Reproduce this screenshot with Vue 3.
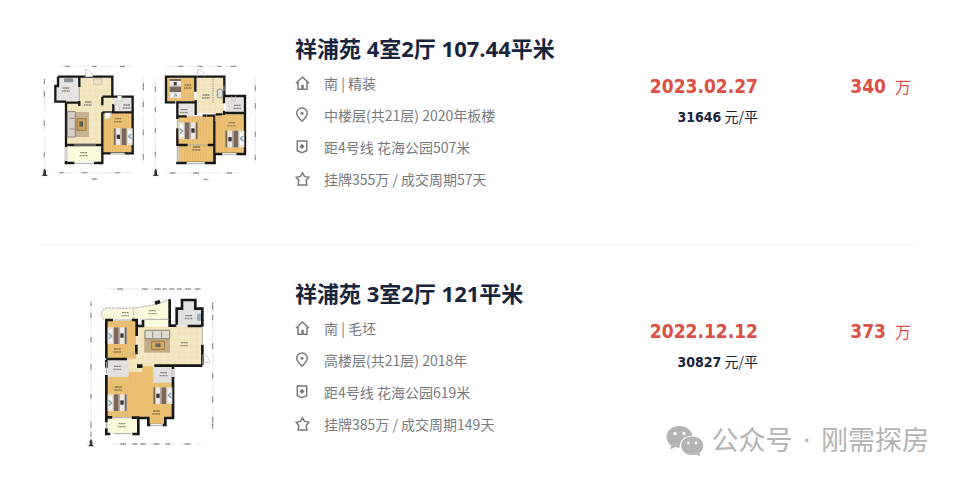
<script setup>
const listings = [
  {
    id: 1,
    plan: 'duplex',
    title: '祥浦苑 4室2厅 107.44平米',
    facts: [
      { icon: 'home', text: '南 | 精装' },
      { icon: 'pin', text: '中楼层(共21层) 2020年板楼' },
      { icon: 'metro', text: '距4号线 花海公园507米' },
      { icon: 'star', text: '挂牌355万 / 成交周期57天' }
    ],
    date: '2023.02.27',
    unit: '31646',
    total: '340'
  },
  {
    id: 2,
    plan: 'single',
    title: '祥浦苑 3室2厅 121平米',
    facts: [
      { icon: 'home', text: '南 | 毛坯' },
      { icon: 'pin', text: '高楼层(共21层) 2018年' },
      { icon: 'metro', text: '距4号线 花海公园619米' },
      { icon: 'star', text: '挂牌385万 / 成交周期149天' }
    ],
    date: '2022.12.12',
    unit: '30827',
    total: '373'
  }
]
</script>

<template>
  <main class="page">
    <svg class="defs" width="0" height="0" aria-hidden="true">
      <defs>
        <g id="bed">
          <rect width="58" height="50" fill="#eee9e1" />
          <rect x="18" width="15" height="50" fill="#77685b" />
          <rect x="33" width="4" height="50" fill="#b7aaa0" />
          <rect x="51" width="6" height="50" fill="#75665a" />
          <rect x="38" y="18" width="10" height="13" fill="#3b3938" />
          <rect x="2" y="5" width="13" height="17" rx="3" fill="#fff" stroke="#b5ada3" />
          <rect x="2" y="28" width="13" height="17" rx="3" fill="#fff" stroke="#b5ada3" />
          <path d="M3 18l9 8-8 8" fill="none" stroke="#7fa9b8" stroke-width="4" />
        </g>
        <g id="label" fill="none" stroke="#463f36" stroke-width="4" opacity=".6">
          <path d="M-10-4H10" stroke-dasharray="6 1" />
          <path d="M-12 5H12" stroke-dasharray="4 1.500 3 1" />
        </g>
        <g id="compass" fill="#303030">
          <path d="M0-14l4 8v10l6 5H-9l5-5V-6z" />
          <circle r="11" fill="none" stroke="#ccc" />
        </g>
        <pattern id="wood" width="24" height="32" patternUnits="userSpaceOnUse">
          <rect width="24" height="32" fill="#e9bc6c" />
          <path d="M4 0v32M12 0v32M20 0v32" stroke="#efc780" stroke-width="2" />
        </pattern>
        <pattern id="tile" width="18" height="18" patternUnits="userSpaceOnUse">
          <rect width="18" height="18" fill="#f2e3bb" />
          <path d="M0 9L9 0l9 9-9 9z" fill="#f4e7c4" />
        </pattern>
      </defs>
    </svg>

    <article v-for="item in listings" :key="item.id" class="listing">
      <div class="photo">
        <svg v-if="item.plan === 'duplex'" class="plan" viewBox="30 0 654 405" width="218" height="135" role="img" aria-label="户型图">
          <g fill="none" stroke="#dedede" stroke-width="2">
            <path d="M88 34H308M88 353H308M43 68V340M340 68V322M408 34H640M408 354H640M376 68V335M676 68V322" stroke-dasharray="46 5 3 5" />
          </g>
          <g fill="none" stroke="#8d8d8d" stroke-width="4" stroke-dasharray="4 1 7 1">
            <path d="M105 34h15M186 34h15M270 34h15M87 353h15M155 353h17M255 353h16M43 72v15M43 108v17M43 197v15M43 292v15M340 85v20M340 140v16M340 225v16M340 298v16M186 372h16M445 34h15M504 34h15M562 34h12M602 34h18M420 354h16M490 354h17M590 354h16M376 95v15M376 157v15M376 220v15M376 290v15M676 92v15M676 145v16M676 230v15M676 300v15M520 373h15" />
          </g>
          <use href="#compass" x="44" y="354" /><use href="#compass" x="377" y="354" />

          <path d="M85 68H247V126H305V170H217V268H108V140H78V94H85z" fill="url(#tile)" />
          <path d="M85 68h61v70H78V94h7zM250 126h55v44h-55z" fill="#e4e3e1" />
          <path d="M220 175h88v120h-88z" fill="url(#wood)" />
          <path d="M108 272h108v50H108z" fill="#fafbdc" />
          <path d="M108 140v183M84 65h163v60h61v170h-91v28M84 65v28h-8v47h32M148 68v28M148 138v15M110 143h40M217 125h32M217 126v25M217 172v125M217 172h91M250 171v-24M108 270h108M104 324h30M192 324h28" fill="none" stroke="#171717" stroke-width="7" />
          <path d="M134 325h58M242 297h42M108 276v42" stroke="#fff" stroke-width="8" />
          <path d="M134 325h58M242 297h42M108 276v42M148 96v42M132 270h66" stroke="#aaa" stroke-width="3" fill="none" />
          <path d="M166 65V43q20 2 22 22M225 173v21q17-2 19-21M251 148q18 2 18 21M263 122v15h12v-15" fill="#fff" stroke="#bdb6a6" stroke-width="2" />
          <rect x="102" y="70" width="28" height="12" rx="3" fill="#899096" />
          <rect x="190" y="72" width="26" height="17" fill="#e9dfc8" stroke="#a39882" />
          <rect x="127" y="171" width="50" height="75" fill="#c6b391" />
          <path d="M112 170h24v76h-24z" fill="#d8d1c7" stroke="#8d8175" stroke-width="3" />
          <path d="M119 190h15M119 222h15" stroke="#90867d" stroke-width="3" />
          <rect x="141" y="191" width="27" height="35" fill="#d2a456" stroke="#9c783d" stroke-width="3" />
          <path d="M148 199h11v16h-11z" fill="#535b56" />
          <use href="#bed" transform="translate(308 270) rotate(180)" />
          <use href="#label" x="108" y="103" /><use href="#label" x="174" y="145" /><use href="#label" x="290" y="154" /><use href="#label" x="264" y="195" /><use href="#label" x="161" y="297" />

          <path d="M409 67h84v72h-84z" fill="url(#wood)" />
          <path d="M499 67h83v108h-83z" fill="url(#tile)" />
          <path d="M443 144h48v40h-48zM588 126h54v48h-54z" fill="#e3e2df" />
          <path d="M442 184h108v138H442zM556 178h87v118h-87z" fill="url(#wood)" />
          <path d="M436 142h-28V65h175v58h62v174h-91v27H442V142h58M496 67v43M497 135v45M440 184h30M518 182h35v141M582 125v20M582 174h63M557 178h20M582 167v13M442 270h31M533 270h20" fill="none" stroke="#171717" stroke-width="7" />
          <path d="M470 325h54M577 298h42M442 273v47M442 192v28" stroke="#fff" stroke-width="8" />
          <path d="M470 325h54M577 298h42M442 273v47M474 270h58M442 192v28M582 92v16" stroke="#aaa" stroke-width="3" />
          <path d="M503 65V43q20 2 21 22M476 134v-20q16 2 17 20M507 179v20q22-2 24-20M556 180v18q18-2 20-18M605 122v14h12v-14" fill="none" stroke="#c1bcae" stroke-width="2" />
          <path d="M549 70v74" stroke="#94907f" stroke-width="3" stroke-dasharray="4 3" />
          <rect x="562" y="102" width="15" height="27" rx="5" fill="#ddd" stroke="#898985" stroke-width="3" />
          <use href="#bed" transform="translate(419 129) rotate(-90) scale(1 .68)" />
          <use href="#bed" x="446" y="202" /><use href="#bed" transform="translate(643 277) rotate(180)" />
          <use href="#label" x="474" y="94" /><use href="#label" x="528" y="124" /><use href="#label" x="462" y="168" /><use href="#label" x="622" y="155" /><use href="#label" x="605" y="207" /><use href="#label" x="500" y="280" />
        </svg>

        <svg v-else class="plan" viewBox="0 0 435 525" width="145" height="175" role="img" aria-label="户型图">
          <g fill="none" stroke="#dedede" stroke-width="2" stroke-dasharray="45 5">
            <path d="M90 27H372M42 65V480M407 65V450M104 492H372" />
          </g>
          <path d="M121 27h17M195 27h17M233 27h18M257 27h11M278 27h14M300 27h14M325 27h17M354 27h16M42 65v14M42 98v16M42 172v15M42 253v16M42 343v15M42 425v18M42 455v15M407 68v22M407 106v15M407 190v17M407 280v15M407 350v17M407 411v35M130 492h17M167 492h14M190 492h16M230 492h17M266 492h13M323 492h17" fill="none" stroke="#8d8d8d" stroke-width="4" stroke-dasharray="5 1 7 1" />
          <use href="#compass" x="42" y="490" />
          <path d="M81 119q-20-25 10-36Q205 92 278 57v79h-75v-19H82z" fill="#fafbdc" />
          <path d="M81 119q-20-25 10-36Q205 92 278 57" fill="none" stroke="#c4c4c4" stroke-width="4" stroke-dasharray="8 2" />
          <path d="M170 87v31M278 61v66" stroke="#adadad" stroke-width="2" />
          <path d="M184 139h190v115H288v21H88v-39h90z" fill="url(#tile)" />
          <path d="M318 63h35v25h22v49h-78V88h21z" fill="#e0e0df" />
          <path d="M91 122h87v114H91z" fill="url(#wood)" />
          <path d="M88 285h200v127h-25v22h-49v-22H88zM154 275h78v12h-78zM196 259h36v29h-36z" fill="url(#wood)" />
          <path d="M88 241h66v51H88zM229 259h60v49h-60z" fill="#e2e1df" />
          <path d="M90 414h91v45H90z" fill="#fafbdc" />
          <path d="M88 235V120h20M164 120h15v48M88 237h62M178 194v29M198 119v19h-19M278 58v79h20M332 138h42M299 134V86h16V60h40v26h21v54M376 194v60M376 257h-88v157h-23v21h-51v-21H188M88 240v222h12M88 412h18M164 413h20v49h-18M180 259h16M232 257h56" fill="none" stroke="#171717" stroke-width="8" />
          <path d="M234 70l15-6M180 258h16" stroke="#171717" stroke-width="11" />
          <path d="M220 436h37M88 263v22M288 267v24M88 427v18" stroke="#fff" stroke-width="9" />
          <path d="M220 436h37M88 246v35M288 267v24M88 427v18M110 120h52M203 118h72M109 461h53M105 413h60M376 140v54" stroke="#aaa" stroke-width="3" />
          <path d="M376 252V225q21 3 23 22h-23M178 193q-25 2-23 26h23M135 412v-17q16 2 18 17" fill="none" stroke="#c1bcae" stroke-width="2" />
          <rect x="202" y="158" width="77" height="60" fill="#c3ad87" />
          <path d="M204 151h74v25h-74z" fill="#e1dbd2" stroke="#8d8175" stroke-width="3" />
          <path d="M227 155v18M254 155v18" stroke="#90867d" stroke-width="3" />
          <rect x="224" y="184" width="38" height="24" fill="#d8ac60" stroke="#98743a" stroke-width="3" />
          <path d="M235 190h16v11h-16z" fill="#626862" />
          <rect x="360" y="101" width="12" height="22" rx="3" fill="#9dabb4" />
          <use href="#bed" x="92" y="142" /><use href="#bed" x="92" y="343" /><use href="#bed" transform="translate(286 372) rotate(180)" />
          <use href="#label" x="145" y="102" /><use href="#label" x="227" y="96" /><use href="#label" x="335" y="111" /><use href="#label" x="322" y="192" /><use href="#label" x="121" y="211" /><use href="#label" x="121" y="263" /><use href="#label" x="260" y="282" /><use href="#label" x="124" y="325" /><use href="#label" x="238" y="397" /><use href="#label" x="135" y="435" />
        </svg>
      </div>

      <section class="details">
        <h2 class="title">{{ item.title }}</h2>
        <ul class="facts">
          <li v-for="fact in item.facts" :key="fact.icon" class="fact">
            <svg class="icon" viewBox="0 0 16 16" width="16" height="16" stroke-width="1.500" aria-hidden="true">
              <g v-if="fact.icon === 'home'">
                <path d="M1 8.200L7.500 2 14 8.200M3 7v7.200h9V7" />
                <path d="M7.500 14V9.800" stroke-width="2.500" />
              </g>
              <g v-else-if="fact.icon === 'pin'">
                <path d="M7 14.300C3.800 11 1.700 9.200 1.700 6.300a5.300 5.300 0 0 1 10.600 0c0 2.900-2.100 4.700-5.300 8z" />
                <circle class="solid" cx="7" cy="6.300" r="1.500" />
              </g>
              <g v-else-if="fact.icon === 'metro'">
                <path d="M2.300 2h9.400v9.700L7 13.700l-4.700-2z" />
                <path class="solid" d="M7 4.700l2.600 2.700L7 10 4.400 7.400z" />
              </g>
              <path v-else d="M7.500 1.800l2 3.600 4.300.9-2.600 3.200.6 4.400H3.200l.6-4.400-2.600-3.200 4.300-.9z" />
            </svg>
            <span>{{ fact.text }}</span>
          </li>
        </ul>
      </section>

      <div class="deal">
        <time class="date">{{ item.date }}</time>
        <p class="unit"><b>{{ item.unit }}</b> 元/平</p>
      </div>
      <p class="total"><b>{{ item.total }}</b><span>万</span></p>
    </article>

    <aside class="watermark">
      <svg viewBox="0 0 38 32" width="38" height="32" aria-hidden="true">
        <path d="M13.500 1C6 1 .5 5.800.5 12c0 3.500 1.800 6.400 4.700 8.400L4.300 24.500l4.800-2.400c1.500.5 3 .7 4.700.7C13 15.500 18.500 10.500 26.500 10.500 25.500 5 20.200 1 13.500 1z" />
        <path d="M26.200 11.500c-6.300 0-11 4.200-11 9.300s4.700 9.200 11 9.200c1.500 0 2.900-.2 4.100-.6l4 2-.9-3.400c2.500-1.700 3.900-4.300 3.900-7.200 0-5.100-4.700-9.300-11.100-9.300z" />
        <g class="eyes"><circle cx="9" cy="8.500" r="1.700" /><circle cx="18" cy="8.500" r="1.700" /><circle cx="22.500" cy="18" r="1.400" /><circle cx="30" cy="18" r="1.400" /></g>
      </svg>
      <p class="account"><span>公众号</span><span>·</span><span>刚需探房</span></p>
    </aside>
  </main>
</template>

<style>
body {
  margin: 0;
  background: #fff;
}
</style>

<style scoped>
.page {
  position: relative;
  padding: 0 46px 0 40px;
  font-family: "Noto Sans CJK SC", sans-serif;
  color: #17243c;
}
.defs {
  position: absolute;
}
.listing {
  display: grid;
  grid-template-columns: 218px minmax(0, 1fr) auto 156px;
  box-sizing: border-box;
  min-height: 245px;
}
.listing + .listing {
  min-height: 234px;
}
.listing:not(:nth-last-of-type(1)) {
  border-bottom: 1px solid #f3f3f3;
}
.photo {
  display: flex;
  justify-content: center;
  align-items: flex-start;
  padding-top: 55px;
}
.listing + .listing .photo {
  padding-top: 35px;
}
.plan {
  display: block;
}
.details {
  padding: 33px 0 0 37px;
}
.title {
  margin: 0;
  font: 700 22px/30px "Open Sans", "Noto Sans CJK SC", sans-serif;
  white-space: nowrap;
}
.facts {
  display: grid;
  gap: 12px;
  margin: 10px 0 0;
  padding: 0;
  list-style: none;
}
.fact {
  display: flex;
  align-items: center;
  gap: 13px;
  font-size: 14px;
  line-height: 20px;
  color: #777b7e;
  white-space: nowrap;
}
.icon {
  flex: none;
  fill: none;
  stroke: #777b7e;
}
.solid {
  fill: #777b7e;
  stroke: none;
}
.deal {
  padding-top: 74px;
  text-align: right;
  white-space: nowrap;
}
.date {
  display: block;
  font: 700 19px/24px "DejaVu Sans Condensed", sans-serif;
  color: #dc5045;
}
.unit {
  margin: 8px 0 0;
  font-size: 14px;
  line-height: 20px;
}
.unit b {
  font-family: "DejaVu Sans Condensed", sans-serif;
}
.total {
  display: flex;
  justify-content: flex-end;
  align-items: baseline;
  gap: 9px;
  margin: 0;
  padding: 74px 3px 0 0;
  font-size: 16px;
  line-height: 24px;
  color: #dc5045;
}
.total b {
  font: 700 19px/24px "DejaVu Sans Condensed", sans-serif;
}
.watermark {
  position: absolute;
  right: 31px;
  bottom: 18px;
  display: flex;
  align-items: center;
  gap: 7px;
  color: #b4b4b4;
}
.watermark svg {
  fill: #b4b4b4;
}
.watermark .eyes {
  fill: #fff;
}
.account {
  display: flex;
  gap: 10px;
  margin: 0;
  font-family: "DejaVu Sans", "Noto Sans CJK SC", sans-serif;
  font-size: 27px;
  line-height: 40px;
  white-space: nowrap;
}
</style>
